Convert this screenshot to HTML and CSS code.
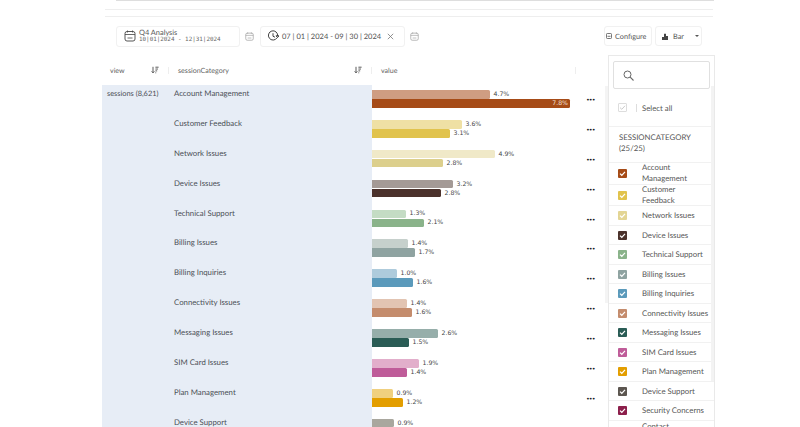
FILE: index.html
```html
<!DOCTYPE html>
<html lang="en">
<head>
<meta charset="utf-8">
<title>Session categories</title>
<link rel="stylesheet" href="styles.css">
</head>
<body>
<svg class="defs" width="0" height="0">
  <symbol id="chk" viewBox="0 0 9 9"><path d="M2 4.6 3.8 6.3 7 2.8" fill="none" stroke="#fff" stroke-width="1.2"/></symbol>
  <symbol id="cal" viewBox="0 0 12 12"><rect x="1" y="1.5" width="10" height="9.5" rx="2" fill="none" stroke="currentColor" stroke-width=".9"/><path d="M1 4.5h10M3.5 8h5M3.5 .5v2M8.500 .5v2" fill="none" stroke="currentColor" stroke-width=".8"/></symbol>
  <symbol id="sort" viewBox="0 0 10 9"><path d="M2.500 .5v7.500M.8 6.200 2.500 8l1.700-1.800M5.500 1h4M5.500 3.300h3.200M5.500 5.600h2.200M5.500 8h1" fill="none" stroke="#444" stroke-width="1.100"/></symbol>
</svg>
<div class="rule rule-a"></div>
<div class="rule rule-b"></div>
<div class="rule rule-c"></div>

<header class="toolbar">
  <div class="card preset">
    <svg class="ic-main" width="12" height="12"><use href="#cal"/></svg>
    <div class="preset-text">
      <div class="preset-name">Q4 Analysis</div>
      <div class="preset-range">10|01|2024 - 12|31|2024</div>
    </div>
  </div>
  <svg class="ic-soft" width="9" height="9"><use href="#cal"/></svg>
  <div class="card range">
    <svg class="ic-clock" width="12" height="12" viewBox="0 0 13 13"><path d="M10.800 8.500A5 5 0 1 1 11.500 6.500M6.500 3.500v3.300l2.200 1M9.800 6.300h3.200L11.400 8.200z" fill="none" stroke="#333" stroke-width="1"/></svg>
    <span class="range-text">07 | 01 | 2024 - 09 | 30 | 2024</span>
    <svg class="ic-x" width="7" height="7" viewBox="0 0 7 7"><path d="M.8.800 6.200 6.200M6.200.8.800 6.200" stroke="#777" stroke-width=".8"/></svg>
  </div>
  <svg class="ic-soft" width="9" height="9"><use href="#cal"/></svg>
  <div class="tool-right">
    <div class="card btn configure">
      <svg width="6" height="6" viewBox="0 0 6 6"><rect x=".5" y=".5" width="5" height="5" rx=".8" fill="none" stroke="#555" stroke-width=".8"/><path d="M1.500 3.300h3" stroke="#555" stroke-width=".8"/></svg>
      <span>Configure</span>
    </div>
    <div class="card btn bar">
      <svg width="6" height="7" viewBox="0 0 6 7"><path d="M0 7V4h2V7zM2 7V.8h2V7zM4 7V3h2V7z" fill="#444"/></svg>
      <span>Bar</span>
      <i class="caret"></i>
    </div>
  </div>
</header>

<div class="thead">
  <div class="th th-view"><span>view</span><svg width="8" height="8"><use href="#sort"/></svg><i class="tick"></i></div>
  <div class="th th-cat"><span>sessionCategory</span><svg width="8" height="8"><use href="#sort"/></svg><i class="tick"></i></div>
  <div class="th th-val"><span>value</span><i class="tick"></i></div>
</div>

<main class="tbody">
  <div class="row"><div class="c-view">sessions (8,621)</div><div class="c-cat">Account Management</div>
    <div class="c-bars">
      <div class="bar-line"><div class="b" style="width:118px;background:#cf9d82"></div><span class="lbl">4.7%</span></div>
      <div class="bar-line"><div class="b inside" style="width:198px;background:#a64b17"><span>7.8%</span></div></div>
    </div><div class="dots">•••</div></div>
  <div class="row"><div class="c-view"></div><div class="c-cat">Customer Feedback</div>
    <div class="c-bars">
      <div class="bar-line"><div class="b" style="width:90px;background:#efe0a4"></div><span class="lbl">3.6%</span></div>
      <div class="bar-line"><div class="b" style="width:78px;background:#e1c34d"></div><span class="lbl">3.1%</span></div>
    </div><div class="dots">•••</div></div>
  <div class="row"><div class="c-view"></div><div class="c-cat">Network Issues</div>
    <div class="c-bars">
      <div class="bar-line"><div class="b" style="width:123px;background:#f0e9c8"></div><span class="lbl">4.9%</span></div>
      <div class="bar-line"><div class="b" style="width:71px;background:#dccf8c"></div><span class="lbl">2.8%</span></div>
    </div><div class="dots">•••</div></div>
  <div class="row"><div class="c-view"></div><div class="c-cat">Device Issues</div>
    <div class="c-bars">
      <div class="bar-line"><div class="b" style="width:81px;background:#a49a96"></div><span class="lbl">3.2%</span></div>
      <div class="bar-line"><div class="b" style="width:69px;background:#4b322c"></div><span class="lbl">2.8%</span></div>
    </div><div class="dots">•••</div></div>
  <div class="row"><div class="c-view"></div><div class="c-cat">Technical Support</div>
    <div class="c-bars">
      <div class="bar-line"><div class="b" style="width:34px;background:#c4dcc4"></div><span class="lbl">1.3%</span></div>
      <div class="bar-line"><div class="b" style="width:52px;background:#8ab38a"></div><span class="lbl">2.1%</span></div>
    </div><div class="dots">•••</div></div>
  <div class="row"><div class="c-view"></div><div class="c-cat">Billing Issues</div>
    <div class="c-bars">
      <div class="bar-line"><div class="b" style="width:36px;background:#c6d0cc"></div><span class="lbl">1.4%</span></div>
      <div class="bar-line"><div class="b" style="width:43px;background:#8fa3a1"></div><span class="lbl">1.7%</span></div>
    </div><div class="dots">•••</div></div>
  <div class="row"><div class="c-view"></div><div class="c-cat">Billing Inquiries</div>
    <div class="c-bars">
      <div class="bar-line"><div class="b" style="width:25px;background:#aecbdc"></div><span class="lbl">1.0%</span></div>
      <div class="bar-line"><div class="b" style="width:41px;background:#5b9abb"></div><span class="lbl">1.6%</span></div>
    </div><div class="dots">•••</div></div>
  <div class="row"><div class="c-view"></div><div class="c-cat">Connectivity Issues</div>
    <div class="c-bars">
      <div class="bar-line"><div class="b" style="width:35px;background:#e2c4b2"></div><span class="lbl">1.4%</span></div>
      <div class="bar-line"><div class="b" style="width:40px;background:#c48c6d"></div><span class="lbl">1.6%</span></div>
    </div><div class="dots">•••</div></div>
  <div class="row"><div class="c-view"></div><div class="c-cat">Messaging Issues</div>
    <div class="c-bars">
      <div class="bar-line"><div class="b" style="width:66px;background:#96aeaa"></div><span class="lbl">2.6%</span></div>
      <div class="bar-line"><div class="b" style="width:37px;background:#2a5c55"></div><span class="lbl">1.5%</span></div>
    </div><div class="dots">•••</div></div>
  <div class="row"><div class="c-view"></div><div class="c-cat">SIM Card Issues</div>
    <div class="c-bars">
      <div class="bar-line"><div class="b" style="width:47px;background:#e2aecb"></div><span class="lbl">1.9%</span></div>
      <div class="bar-line"><div class="b" style="width:35px;background:#bf5c99"></div><span class="lbl">1.4%</span></div>
    </div><div class="dots">•••</div></div>
  <div class="row"><div class="c-view"></div><div class="c-cat">Plan Management</div>
    <div class="c-bars">
      <div class="bar-line"><div class="b" style="width:21px;background:#f0d07f"></div><span class="lbl">0.9%</span></div>
      <div class="bar-line"><div class="b" style="width:31px;background:#e39e00"></div><span class="lbl">1.2%</span></div>
    </div><div class="dots">•••</div></div>
  <div class="row"><div class="c-view"></div><div class="c-cat">Device Support</div>
    <div class="c-bars">
      <div class="bar-line"><div class="b" style="width:22px;background:#a9a79e"></div><span class="lbl">0.9%</span></div>
    </div></div>
</main>

<aside class="panel">
  <div class="search">
    <svg width="11" height="11" viewBox="0 0 11 11"><circle cx="4.500" cy="4.500" r="3.500" fill="none" stroke="#666" stroke-width="1"/><path d="M7.200 7.200 10.500 10.500" stroke="#666" stroke-width="1.100"/></svg>
  </div>
  <div class="select-all">
    <span class="cb-empty"><svg width="9" height="9" viewBox="0 0 9 9"><path d="M2 4.600 3.800 6.300 7 2.800" fill="none" stroke="#ccc" stroke-width="1"/></svg></span>
    <span class="sep"></span>
    <span>Select all</span>
  </div>
  <div class="group-title">SESSIONCATEGORY<br>(25/25)</div>
  <ul class="items">
    <li class="it tall"><span class="cb" style="background:#a64b17"><svg width="9" height="9"><use href="#chk"/></svg></span><span class="it-t">Account Management</span></li>
    <li class="it tall"><span class="cb" style="background:#e1c34d"><svg width="9" height="9"><use href="#chk"/></svg></span><span class="it-t">Customer Feedback</span></li>
    <li class="it"><span class="cb" style="background:#e3d594"><svg width="9" height="9"><use href="#chk"/></svg></span><span class="it-t">Network Issues</span></li>
    <li class="it"><span class="cb" style="background:#4b322c"><svg width="9" height="9"><use href="#chk"/></svg></span><span class="it-t">Device Issues</span></li>
    <li class="it"><span class="cb" style="background:#8ab38a"><svg width="9" height="9"><use href="#chk"/></svg></span><span class="it-t">Technical Support</span></li>
    <li class="it"><span class="cb" style="background:#8fa3a1"><svg width="9" height="9"><use href="#chk"/></svg></span><span class="it-t">Billing Issues</span></li>
    <li class="it"><span class="cb" style="background:#5b9abb"><svg width="9" height="9"><use href="#chk"/></svg></span><span class="it-t">Billing Inquiries</span></li>
    <li class="it"><span class="cb" style="background:#c48c6d"><svg width="9" height="9"><use href="#chk"/></svg></span><span class="it-t">Connectivity Issues</span></li>
    <li class="it"><span class="cb" style="background:#2a5c55"><svg width="9" height="9"><use href="#chk"/></svg></span><span class="it-t">Messaging Issues</span></li>
    <li class="it"><span class="cb" style="background:#bf5c99"><svg width="9" height="9"><use href="#chk"/></svg></span><span class="it-t">SIM Card Issues</span></li>
    <li class="it"><span class="cb" style="background:#e39e00"><svg width="9" height="9"><use href="#chk"/></svg></span><span class="it-t">Plan Management</span></li>
    <li class="it"><span class="cb" style="background:#5c5650"><svg width="9" height="9"><use href="#chk"/></svg></span><span class="it-t">Device Support</span></li>
    <li class="it"><span class="cb" style="background:#8c1f4b"><svg width="9" height="9"><use href="#chk"/></svg></span><span class="it-t">Security Concerns</span></li>
    <li class="it tall"><span class="it-t">Contact</span></li>
  </ul>
</aside>
</body>
</html>
```

FILE: styles.css
```css
* { box-sizing: border-box; }
html, body { margin: 0; padding: 0; }
body {
  position: relative;
  width: 800px;
  height: 427px;
  overflow: hidden;
  background: #fff;
  color: #4a4d55;
  font-family: "Lato", "Liberation Sans", sans-serif;
  font-size: 7.800px;
  text-rendering: geometricPrecision;
}
.defs { position: absolute; }

.rule { background: #eeeeee; height: 1px; }
.rule-a { margin: 0 86px 0 116px; background: #dedede; }
.rule-b { margin: 8px 87px 0 105px; }
.rule-c { margin: 6px 87px 0 105px; }

.toolbar {
  display: flex;
  align-items: center;
  height: 22px;
  margin: 8px 98px 0 116px;
}
.card {
  display: flex;
  align-items: center;
  height: 21px;
  border: 1px solid #f1f1f1;
  border-radius: 3px;
}
.preset { width: 124px; padding-left: 7px; }
.ic-main { color: #444; flex: none; }
.preset-text { margin-left: 3px; }
.preset-name { font-size: 7.400px; line-height: 8px; color: #555; }
.preset-range {
  font-family: "DejaVu Sans Mono", monospace;
  font-size: 5.900px;
  line-height: 7px;
  color: #666;
}
.ic-soft { color: #999; margin: 0 6px 0 5px; flex: none; }
.range { width: 145px; padding-left: 6px; }
.ic-clock { flex: none; }
.range-text { margin-left: 3px; font-size: 7.500px; color: #555; white-space: nowrap; }
.ic-x { margin-left: 6px; flex: none; }
.tool-right { margin-left: auto; display: flex; gap: 3px; }
.btn { height: 20px; padding: 0 0 0 1px; gap: 3px; font-size: 7.300px; color: #555; }
.configure { width: 48px; }
.bar { width: 47px; padding-left: 6px; gap: 5px; }
.caret {
  margin-left: 6px;
  border-left: 2px solid transparent;
  border-right: 2px solid transparent;
  border-top: 2px solid #555;
}

.thead {
  display: flex;
  height: 30px;
  margin: 8px 0 0 102px;
  align-items: center;
  font-size: 7.100px;
  color: #666;
}
.th { display: flex; align-items: center; justify-content: space-between; position: relative; }
.th svg { margin-right: 10px; }
.th-view { width: 67px; padding-left: 8px; }
.th-cat { width: 203px; padding-left: 9px; }
.th-val { width: 204px; padding-left: 9px; }
.tick {
  position: absolute;
  right: 0;
  top: 50%;
  width: 1px;
  height: 7px;
  margin-top: -3.500px;
  background: #eee;
}

.tbody { margin-left: 102px; }
.row { display: flex; height: 29.900px; }
.c-view {
  width: 68px;
  background: #e7edf6;
  padding: 3px 0 0 5px;
  line-height: 11px;
  font-size: 7.400px;
  white-space: nowrap;
}
.c-cat {
  width: 202px;
  background: #e7edf6;
  padding: 3px 0 0 4px;
  line-height: 11px;
}
.c-bars { width: 214px; padding-top: 5px; }
.bar-line { display: flex; align-items: center; height: 8.700px; margin-bottom: .3px; }
.b { height: 100%; border-radius: 0 1.500px 1.500px 0; flex: none; }
.lbl {
  margin-left: 3.500px;
  font-family: "DejaVu Sans", sans-serif;
  font-size: 6.200px;
  color: #444;
}
.inside {
  display: flex;
  justify-content: flex-end;
  align-items: center;
  padding-right: 2px;
  font-family: "DejaVu Sans", sans-serif;
  font-size: 6.200px;
  color: #f3e3d8;
}
.dots {
  margin-top: 12px;
  font-family: "DejaVu Sans", sans-serif;
  font-size: 6.500px;
  line-height: 6px;
  letter-spacing: -1px;
  color: #222;
  white-space: nowrap;
}

.panel {
  position: absolute;
  left: 608px;
  top: 55px;
  width: 107px;
  height: 372px;
  background: #fff;
  border: 1px solid #e9e9e9;
  border-bottom: 0;
  color: #555;
}
.panel::before {
  content: "";
  position: absolute;
  left: -4px;
  top: 30px;
  width: 3px;
  height: 217px;
  background: #f4f4f4;
}
.panel::after {
  content: "";
  position: absolute;
  right: 0;
  top: 30px;
  width: 3px;
  height: 295px;
  background: #f3f3f3;
}
.search {
  display: flex;
  align-items: center;
  height: 28px;
  margin: 5px 4px 0;
  padding-left: 9px;
  border: 1px solid #e0e0e0;
  border-radius: 2px;
}
.select-all {
  display: flex;
  align-items: center;
  height: 38px;
  padding-left: 9px;
  border-bottom: 1px solid #f1f1f1;
}
.cb-empty {
  display: flex;
  width: 9px;
  height: 9px;
  border: 1px solid #ddd;
  border-radius: 1px;
}
.cb-empty svg { margin: -1px; flex: none; }
.sep { width: 1px; height: 8px; background: #ddd; margin: 0 5px 0 9px; }
.group-title {
  height: 36px;
  padding: 5px 0 0 10px;
  line-height: 11px;
  border-bottom: 1px solid #f1f1f1;
}
.items { list-style: none; margin: 0; padding: 0; }
.it {
  display: flex;
  align-items: center;
  height: 19.500px;
  padding-left: 9px;
  border-bottom: 1px solid #f1f1f1;
  line-height: 11px;
}
.it.tall { height: 21.700px; }
.it.tall .it-t { width: min-content; }
.cb { display: block; width: 9px; height: 9px; border-radius: 1px; flex: none; }
.cb svg { display: block; }
.it-t { margin-left: 15px; }
.it:last-child .it-t { margin-left: 24px; }
.it:last-child { align-items: flex-start; padding-top: 0; }
```
